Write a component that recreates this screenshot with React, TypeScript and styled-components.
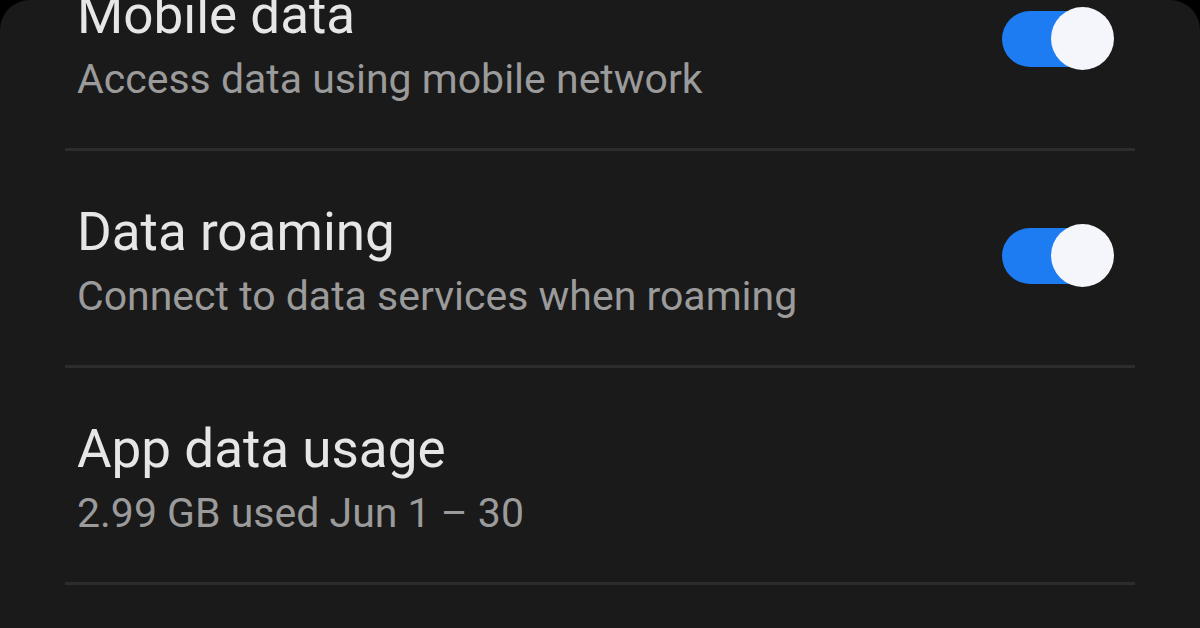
import React from 'react';
import styled, { createGlobalStyle } from 'styled-components';

const GlobalStyle = createGlobalStyle`
  html, body {
    margin: 0;
    padding: 0;
    background: #000;
  }
  body {
    font-family: Roboto, "Noto Sans", "Liberation Sans", sans-serif;
  }
`;

type Item = {
  id: string;
  title: string;
  summary: string;
  toggle?: boolean;
};

const items: Item[] = [
  { id: 'mobile', title: 'Mobile data', summary: 'Access data using mobile network', toggle: true },
  { id: 'roaming', title: 'Data roaming', summary: 'Connect to data services when roaming', toggle: true },
  { id: 'usage', title: 'App data usage', summary: '2.99 GB used Jun 1 – 30' },
];

const App: React.FC = () => {
  return (
    <>
      <GlobalStyle />
      <Screen>
        <List>
          {items.map((item) => (
            <Row key={item.id}>
              <Texts>
                <Title>{item.title}</Title>
                <Summary>{item.summary}</Summary>
              </Texts>
              {item.toggle && (
                <Switch>
                  <Thumb />
                </Switch>
              )}
            </Row>
          ))}
        </List>
      </Screen>
    </>
  );
};

export default App;

const Screen = styled.div`
  width: 1200px;
  height: 628px;
  background: #1a1a1a;
  border-radius: 30px 30px 0 0;
  overflow: hidden;
`;

const List = styled.div`
  margin-top: -66px;
  padding: 0 65px;
  display: flex;
  flex-direction: column;
`;

const Row = styled.div`
  display: flex;
  align-items: center;
  padding: 50px 27px 45px 12px;
  border-bottom: 3px solid #2c2c2c;
`;

const Texts = styled.div`
  flex: 1;
  display: flex;
  flex-direction: column;
  gap: 9px;
`;

const Title = styled.div`
  font-size: 53px;
  line-height: 62px;
  color: #e6e6e6;
`;

const Summary = styled.div`
  font-size: 41px;
  line-height: 48px;
  color: #9b9b9b;
`;

const Switch = styled.div`
  width: 106px;
  height: 56px;
  margin-bottom: 10px;
  border-radius: 28px;
  background: #1e7cf2;
  display: flex;
  align-items: center;
  justify-content: flex-end;
`;

const Thumb = styled.div`
  width: 63px;
  height: 63px;
  margin-right: -6px;
  border-radius: 50%;
  background: #f4f6fb;
`;
